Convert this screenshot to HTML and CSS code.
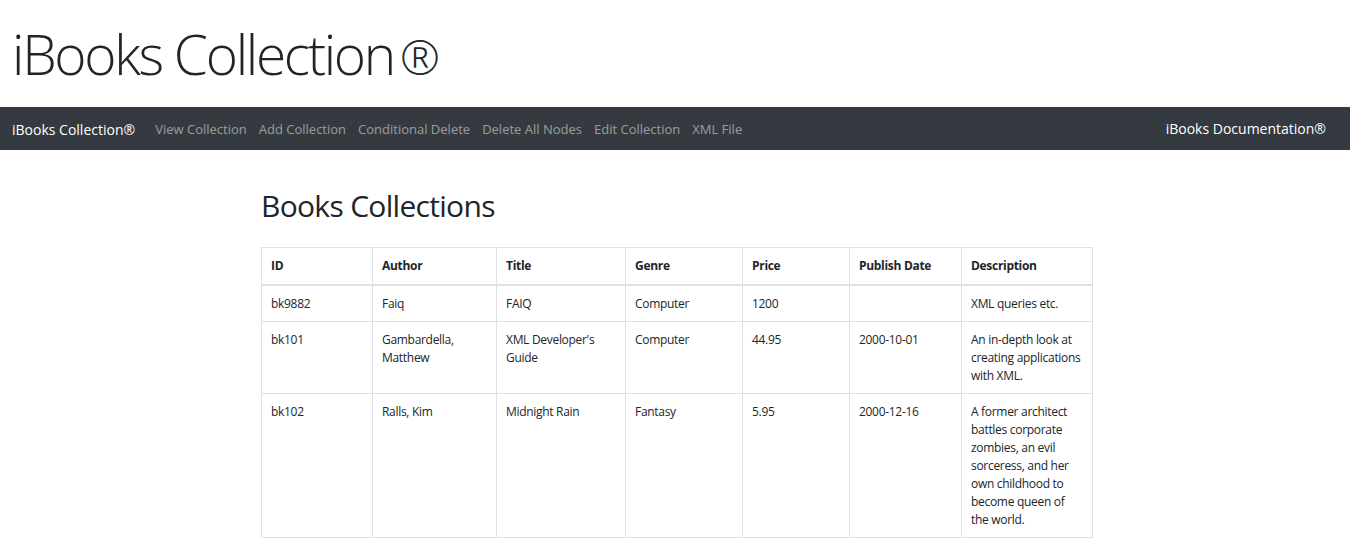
FILE: index.html
```html
<!DOCTYPE html>
<html lang="en">
<head>
<meta charset="utf-8">
<title>iBooks Collection</title>
<link rel="stylesheet" href="styles.css">
</head>
<body>
<header class="masthead">
  <h1 class="display">iBooks Collection<span class="reg">®</span></h1>
</header>
<nav class="navbar">
  <a class="brand" href="#">iBooks Collection®</a>
  <ul class="nav-links">
    <li><a href="#">View Collection</a></li>
    <li><a href="#">Add Collection</a></li>
    <li><a href="#">Conditional Delete</a></li>
    <li><a href="#">Delete All Nodes</a></li>
    <li><a href="#">Edit Collection</a></li>
    <li><a href="#">XML File</a></li>
  </ul>
  <a class="doc" href="#">iBooks Documentation®</a>
</nav>
<main class="content">
  <h2 class="section-title">Books Collections</h2>
  <table class="books">
    <colgroup>
      <col class="c1"><col class="c2"><col class="c3"><col class="c4"><col class="c5"><col class="c6"><col class="c7">
    </colgroup>
    <thead>
      <tr><th>ID</th><th>Author</th><th>Title</th><th>Genre</th><th>Price</th><th>Publish Date</th><th>Description</th></tr>
    </thead>
    <tbody>
      <tr><td>bk9882</td><td>Faiq</td><td>FAIQ</td><td>Computer</td><td>1200</td><td></td><td>XML queries etc.</td></tr>
      <tr><td>bk101</td><td>Gambardella, Matthew</td><td>XML Developer's Guide</td><td>Computer</td><td>44.95</td><td>2000-10-01</td><td>An in-depth look at creating applications with XML.</td></tr>
      <tr><td>bk102</td><td>Ralls, Kim</td><td>Midnight Rain</td><td>Fantasy</td><td>5.95</td><td>2000-12-16</td><td>A former architect battles corporate zombies, an evil sorceress, and her own childhood to become queen of the world.</td></tr>
    </tbody>
  </table>
</main>
</body>
</html>
```

FILE: styles.css
```css
* { box-sizing: border-box; }
html, body { margin: 0; padding: 0; }
body {
  font-family: "Open Sans", "Noto Sans", sans-serif;
  color: #212529;
  background: #fff;
  font-size: 12px;
  line-height: 1.5;
}
.masthead { padding: 20px 12px 20px; }
.display {
  margin: 0;
  height: 67px;
  font-size: 55px;
  font-weight: 300;
  line-height: 67px;
  letter-spacing: -2.3px;
}
.display .reg {
  margin-left: 6px;
  letter-spacing: 0;
  font-size: 48px;
  line-height: 1;
}
.navbar {
  display: flex;
  align-items: center;
  height: 43px;
  padding: 2px 12px 0;
  background: #343a40;
}
.navbar a { text-decoration: none; }
.brand {
  color: #fff;
  font-size: 14px;
  margin-right: 14px;
}
.nav-links {
  display: flex;
  list-style: none;
  margin: 0;
  padding: 0;
  flex: 1;
}
.nav-links a {
  display: block;
  padding: 0 6px;
  color: rgba(255,255,255,.5);
  font-size: 13px;
}
.doc {
  color: #fff;
  font-size: 14px;
  margin-right: 12px;
  margin-top: -3px;
}
.content {
  width: 832px;
  margin-left: calc(50% - 414px);
}
.section-title {
  margin: 37px 0 23px;
  font-size: 30px;
  font-weight: 400;
  line-height: 37px;
  letter-spacing: -0.7px;
}
.books {
  width: 832px;
  table-layout: fixed;
  border-collapse: collapse;
  letter-spacing: -0.3px;
}
.books th, .books td {
  border: 1px solid #dee2e6;
  padding: 9px 9px 8px;
  vertical-align: top;
  text-align: left;
}
.books th { font-weight: 700; border-bottom-width: 2px; padding-bottom: 9px; }
.c1 { width: 111px; }
.c2 { width: 124px; }
.c3 { width: 129px; }
.c4 { width: 117px; }
.c5 { width: 107px; }
.c6 { width: 112px; }
.c7 { width: 131px; }
```
